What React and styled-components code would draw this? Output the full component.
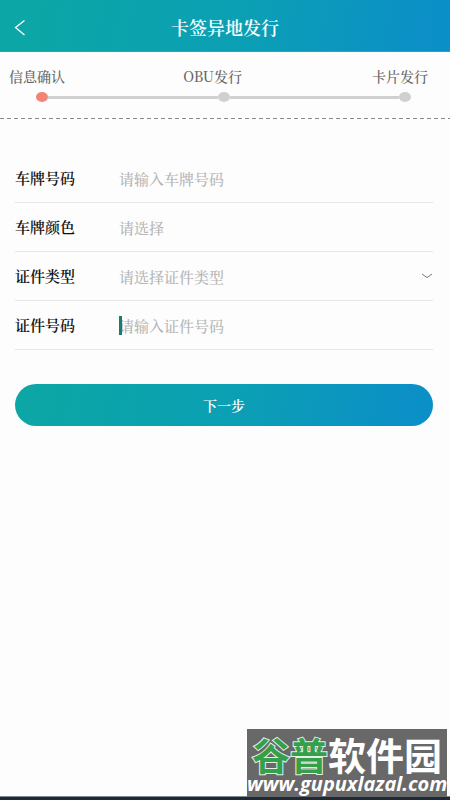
import React from 'react';
import styled, { createGlobalStyle } from 'styled-components'

const steps = ['信息确认', 'OBU发行', '卡片发行'];

const App = () => {
  return (
    <Page>
      <GlobalStyle />
      <Header>
        <BackButton type="button" aria-label="返回">
          <svg width="12" height="18" viewBox="0 0 12 18" fill="none" stroke="currentColor" strokeWidth="1.3">
            <path d="M10.5 1.5L1.5 8.5L10.5 16" />
          </svg>
        </BackButton>
        <Title>卡签异地发行</Title>
      </Header>
      <Progress>
        <StepLabels>
          {steps.map(step => <li key={step}>{step}</li>)}
        </StepLabels>
        <Track>
          <Dot $active />
          <Line />
          <Dot />
          <Line />
          <Dot />
        </Track>
      </Progress>
      <Form onSubmit={e => e.preventDefault()}>
        <Row>
          <Label htmlFor="plate">车牌号码</Label>
          <Field>
            <Input id="plate" placeholder="请输入车牌号码" />
          </Field>
        </Row>
        <Row>
          <Label htmlFor="color">车牌颜色</Label>
          <Field>
            <Select id="color" defaultValue="">
              <option value="">请选择</option>
            </Select>
          </Field>
        </Row>
        <Row>
          <Label htmlFor="idType">证件类型</Label>
          <Field>
            <Select id="idType" defaultValue="">
              <option value="">请选择证件类型</option>
            </Select>
            <svg width="12" height="6" viewBox="0 0 12 6" fill="none" stroke="#777" strokeWidth="1">
              <path d="M1 1L6 4.6L11 1" />
            </svg>
          </Field>
        </Row>
        <Row>
          <Label htmlFor="idNumber">证件号码</Label>
          <Field>
            <Caret />
            <Input id="idNumber" placeholder="请输入证件号码" />
          </Field>
        </Row>
        <Submit type="submit">下一步</Submit>
      </Form>
      <Watermark>
        <SiteName><em>谷普</em>软件园</SiteName>
        <SiteUrl>www.gupuxlazal.com</SiteUrl>
      </Watermark>
      <BottomBar />
    </Page>
  )
}

const GlobalStyle = createGlobalStyle`
  * {
    box-sizing: border-box;
  }

  body {
    margin: 0;
    background-color: #fdfdfd;
    font-family: "Noto Serif CJK SC", "Noto Sans CJK SC", serif;
  }

  input, select, button {
    font-family: inherit;
  }
`;

const Page = styled.div`
  position: relative;
  display: flex;
  flex-direction: column;
  min-height: 100vh;
`;

const Header = styled.header`
  display: grid;
  grid-template-columns: 40px 1fr 40px;
  align-items: center;
  height: 52px;
  background: linear-gradient(100deg, #0ca6a6 8%, #0b9fb5 55%, #0b8fc7 95%);
  border-bottom: 1px solid #3f9da3;
  color: #fff;
`;

const BackButton = styled.button`
  display: flex;
  justify-content: center;
  padding: 4px 0 0;
  border: 0;
  background: none;
  color: #fff;
`;

const Title = styled.h1`
  margin: 0;
  padding-top: 2px;
  font-size: 18px;
  font-weight: 600;
  line-height: 24px;
  text-align: center;
`;

const Progress = styled.section`
  height: 67px;
  padding-top: 13px;
  background: repeating-linear-gradient(90deg, #888 0 4px, transparent 4px 7px) left bottom / 100% 1px no-repeat;
`;

const StepLabels = styled.ol`
  display: grid;
  grid-template-columns: 12fr 13fr auto;
  margin: 0;
  padding: 0 22px 0 9px;
  list-style: none;
  color: #666;
  font-size: 14px;
  font-weight: 500;
  line-height: 22px;
`;

const Track = styled.div`
  display: flex;
  align-items: center;
  height: 20px;
  padding: 0 39px 0 36px;
`;

const Dot = styled.span`
  width: 12px;
  height: 10px;
  border-radius: 50%;
  background-color: ${props => props.$active ? '#f08576' : '#d0d0d0'};
`;

const Line = styled.span`
  flex: 1;
  height: 3px;
  background-color: #d0d0d0;
`;

const Form = styled.form`
  flex: 1;
  padding: 35px 17px 0 15px;
`;

const Row = styled.div`
  display: flex;
  align-items: center;
  height: 49px;
  border-bottom: 1px solid #e6e6e6;
`;

const Label = styled.label`
  width: 104px;
  color: #111;
  font-size: 15px;
  font-weight: 600;
  line-height: 22px;
`;

const Field = styled.div`
  position: relative;
  display: flex;
  flex: 1;
  align-items: center;
`;

const Input = styled.input`
  flex: 1;
  min-width: 0;
  height: 24px;
  padding: 0;
  border: 0;
  outline: 0;
  background: none;
  color: #111;
  font-size: 15px;
  font-weight: 500;

  &::placeholder {
    color: #b5b5b5;
  }
`;

const Select = styled.select`
  flex: 1;
  min-width: 0;
  height: 24px;
  padding: 0;
  border: 0;
  outline: 0;
  appearance: none;
  background: none;
  color: #b5b5b5;
  font-size: 15px;
  font-weight: 500;
`;

const Caret = styled.span`
  position: absolute;
  top: 3px;
  left: 0;
  width: 3px;
  height: 19px;
  background-color: #128070;
`;

const Submit = styled.button`
  display: block;
  width: 100%;
  height: 42px;
  margin-top: 34px;
  border: 0;
  border-radius: 21px;
  background: linear-gradient(100deg, #0ca6a6 8%, #0b9fb5 55%, #0b8fc7 95%);
  color: #fff;
  font-size: 14px;
  font-weight: 600;
`;

const Watermark = styled.aside`
  position: absolute;
  right: 3px;
  bottom: 3px;
  width: 200px;
  height: 68px;
  background-color: #686868;
  color: #fff;
  text-align: center;
  white-space: nowrap;
`;

const SiteName = styled.div`
  padding-top: 5px;
  font-family: "Noto Sans CJK SC", sans-serif;
  font-size: 38px;
  font-weight: 700;
  line-height: 40px;

  em {
    color: #35a04a;
    font-style: normal;
    -webkit-text-stroke: 2px #e4efe4;
    paint-order: stroke fill;
  }
`;

const SiteUrl = styled.div`
  font-family: "Open Sans", "Noto Sans", sans-serif;
  font-size: 20px;
  font-style: italic;
  font-weight: 700;
  line-height: 20px;
`;

const BottomBar = styled.footer`
  height: 4px;
  border-top: 1px solid #7d8a8e;
  background-color: #1d2a35;
`;

export default App
